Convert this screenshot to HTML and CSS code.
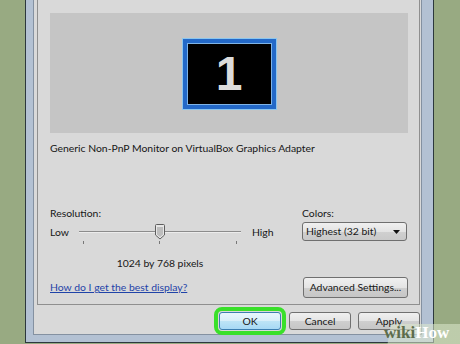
FILE: index.html
```html
<!DOCTYPE html>
<html lang="en">
<head>
  <meta charset="UTF-8">
  <meta name="viewport" content="width=device-width, initial-scale=1.0">
  <title>Screen Resolution</title>
  <link rel="stylesheet" href="styles.css">
</head>
<body>

  <div class="window">
    <div class="dialog">

      <div class="page">
        <div class="preview">
          <div class="monitor">1</div>
        </div>

        <p class="adapter">Generic Non-PnP Monitor on VirtualBox Graphics Adapter</p>

        <div class="settings">
          <div class="resolution">
            <div class="label">Resolution:</div>
            <div class="slider-row">
              <span class="end low">Low</span>
              <svg class="slider" width="162" height="21" viewBox="0 0 162 21">
                <line x1="0" y1="7.5" x2="162" y2="7.5" stroke="#8c8c8c" stroke-width="1"/>
                <line x1="0" y1="8.5" x2="162" y2="8.5" stroke="#ececec" stroke-width="1"/>
                <line x1="4.5" y1="17" x2="4.5" y2="20" stroke="#777"/>
                <line x1="80.5" y1="17" x2="80.5" y2="20" stroke="#777"/>
                <line x1="157.5" y1="17" x2="157.5" y2="20" stroke="#777"/>
                <path d="M76.5 1.5 Q76.5 0.5 77.5 0.5 L84.5 0.5 Q85.5 0.5 85.5 1.5 L85.5 11 L81 15 L76.5 11 Z" fill="#e6e6e6" stroke="#5e5e5e"/>
                <path d="M78 3 L84 3 L84 10.5 L81 13 L78 10.5 Z" fill="#bdbdbd"/>
              </svg>
              <span class="end">High</span>
            </div>
            <div class="pixels">1024 by 768 pixels</div>
          </div>

          <div class="colors">
            <div class="label">Colors:</div>
            <div class="select">
              <span>Highest (32 bit)</span>
              <svg width="7" height="4" viewBox="0 0 7 4"><path d="M0 0 L7 0 L3.5 4 Z" fill="#111"/></svg>
            </div>
          </div>
        </div>

        <div class="page-foot">
          <a class="help" href="#">How do I get the best display?</a>
          <button class="btn wide">Advanced Settings...</button>
        </div>
      </div>

      <div class="actions">
        <button class="btn default">OK</button>
        <button class="btn">Cancel</button>
        <button class="btn">Apply</button>
      </div>

    </div>
  </div>

  <div class="watermark"><span class="wiki">wiki</span>How</div>

</body>
</html>
```

FILE: styles.css
```css
body {
  margin: 0;
  background: #98aa82;
  font-family: Lato, 'Liberation Sans', sans-serif;
  font-size: 10.4px;
  line-height: 13px;
  color: #161616;
  overflow: hidden;
}

.window {
  margin-left: 25px;
  width: 409px;
  height: 343px;
  box-sizing: border-box;
  border: 1px solid #2c383d;
  border-top: none;
  background: #b3c1d3;
  padding: 0 11px 7px 7px;
  display: flex;
}

.dialog {
  flex: 1;
  background: #d9d9d9;
  border: 1px solid #8491a1;
  border-top: none;
  display: flex;
  flex-direction: column;
}

.page {
  margin: 0 1px 0 3px;
  border: 1px solid #8f8f8f;
  border-top: none;
  padding: 13px 11px 6px 12px;
}

.preview {
  height: 120px;
  background: #c5c5c5;
  display: flex;
  align-items: center;
  justify-content: center;
}

.monitor {
  width: 85px;
  height: 62px;
  margin-top: 2px;
  background: #000;
  border: 4px solid #2369c8;
  box-shadow: 0 0 0 1px #8cc6ee, inset 0 0 0 1px #7fb4e6;
  color: #dcdcdc;
  font-family: 'Liberation Sans', sans-serif;
  font-weight: bold;
  font-size: 48px;
  line-height: 62px;
  text-align: center;
}

.adapter {
  margin: 9px 0 0;
}

.settings {
  display: flex;
  justify-content: space-between;
  margin-top: 52px;
}

.slider-row {
  display: flex;
  align-items: flex-start;
  margin-top: 4px;
}

.end {
  line-height: 16px;
}

.low {
  width: 29px;
}

.slider {
  display: block;
  margin-right: 11px;
}

.pixels {
  margin: 12px 0 0 29px;
  width: 162px;
  text-align: center;
}

.colors {
  width: 106px;
}

.select {
  margin-top: 2px;
  width: 105px;
  height: 19px;
  box-sizing: border-box;
  border: 1px solid #6f6f6f;
  border-radius: 3px;
  background: linear-gradient(#f0f0f0, #e3e3e3 50%, #d0d0d0 51%, #c9c9c9);
  display: flex;
  align-items: center;
  justify-content: space-between;
  padding: 0 6px 0 3px;
}

.page-foot {
  display: flex;
  align-items: center;
  justify-content: space-between;
  margin-top: 7px;
}

.help {
  color: #1f43a8;
}

.btn {
  font-family: inherit;
  font-size: 10.4px;
  line-height: 13px;
  color: #161616;
  width: 62px;
  height: 18px;
  padding: 0;
  border: 1px solid #707070;
  border-radius: 3px;
  background: linear-gradient(#f0f0f0, #e4e4e4 50%, #cfcfcf 51%, #c6c6c6);
}

.btn.wide {
  width: 105px;
  height: 21px;
}

.btn.default {
  border-color: #3c7fb1;
  background: linear-gradient(#e9f6fd, #d7eef9 50%, #bde4f6 51%, #a7d9f5);
  outline: 4px solid #39e02a;
  outline-offset: 1px;
}

.actions {
  display: flex;
  justify-content: flex-end;
  gap: 7px;
  margin-top: 7px;
  padding-right: 1px;
}

.actions .default {
  margin-right: 1px;
}

/* watermark sits over the bottom-right corner */
.watermark {
  position: absolute;
  right: 0;
  bottom: 0;
  width: 90px;
  height: 20px;
  padding: 4px 0 0 14px;
  box-sizing: border-box;
  background: linear-gradient(100deg, transparent 0 22%, rgba(220, 232, 205, 0.55) 23%);
  font-family: 'Liberation Serif', serif;
  font-weight: bold;
  font-size: 17px;
  line-height: 10px;
  color: #fff;
}

.wiki {
  color: #5d6d4c;
}
```
